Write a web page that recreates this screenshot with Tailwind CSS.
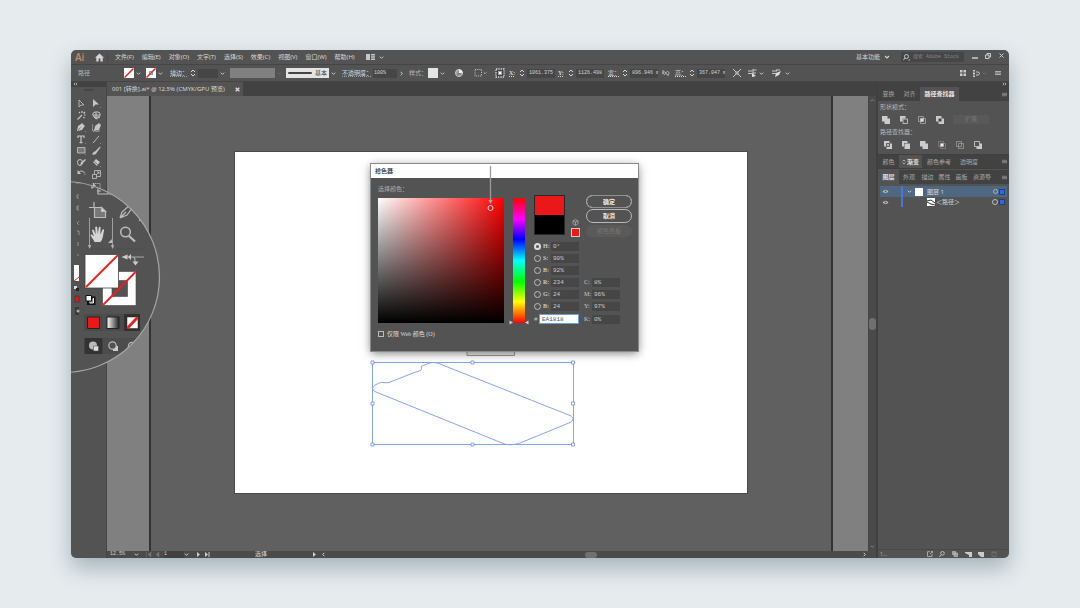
<!DOCTYPE html>
<html lang="zh-CN">
<head>
<meta charset="utf-8">
<meta name="viewport" content="width=device-width, initial-scale=1">
<title>001 [转换].ai</title>
<script src="https://cdn.jsdelivr.net/npm/@tailwindcss/browser@4"></script>
</head>
<body class="bg-[#e6ebee] font-['Noto_Sans','Noto_Sans_CJK_SC',sans-serif] text-[6px] leading-[8px] text-[#d6d6d6]">
<svg class="hidden" aria-hidden="true">
  <symbol id="chev" viewBox="0 0 6 6"><path d="M1 2l2 2 2-2" fill="none" stroke="currentColor" stroke-width="1.1"/></symbol>
  <symbol id="right" viewBox="0 0 6 6"><path d="M2 1l2 2-2 2" fill="none" stroke="currentColor" stroke-width="1.1"/></symbol>
  <symbol id="left" viewBox="0 0 6 6"><path d="M4 1L2 3l2 2" fill="none" stroke="currentColor" stroke-width="1.1"/></symbol>
  <symbol id="step" viewBox="0 0 6 8"><path d="M1 3l2-2 2 2M1 5l2 2 2-2" fill="none" stroke="currentColor" stroke-width="1"/></symbol>
  <symbol id="menu" viewBox="0 0 6 6"><path d="M0 1.5h6M0 3h6M0 4.5h6" stroke="currentColor" stroke-width=".7"/></symbol>
  <symbol id="none" viewBox="0 0 10 10"><path d="M0 0h10v10H0z" fill="#fff"/><path d="M.5 9.5l9-9" stroke="#f02020" stroke-width="1.5"/></symbol>
  <symbol id="eye" viewBox="0 0 8 6"><path d="M.5 3Q4-1 7.500 3 4 7 .5 3z" fill="#c4c4c4"/><circle cx="4" cy="3" r="1.200" fill="#4c5560"/></symbol>
</svg>
<div class="flex min-h-screen px-[71px] py-[50px]">
<main class="relative flex flex-1 flex-col overflow-hidden rounded-[5px] bg-[#535353] shadow-[0_10px_22px_#a3b2bb]">

  <header class="flex h-[14px] shrink-0 items-center">
    <span class="w-[20px] pl-1 font-['Open_Sans'] text-[10px] font-semibold leading-[12px] text-[#c98a63]">Ai</span>
    <button aria-label="主页" class="flex w-[16px] justify-center"><svg class="size-[9px]" viewBox="0 0 9 9"><path d="M4.500 .5L0 4.700h1.300V8.500h2.300V5.500h1.800v3h2.300V4.700H9z" fill="#d6d6d6"/></svg></button>
    <span class="h-2 w-px bg-[#474747]"></span>
    <nav class="ml-[7px] flex gap-[8px] whitespace-nowrap">
      <button>文件(F)</button><button>编辑(E)</button><button>对象(O)</button><button>文字(T)</button><button>选择(S)</button><button>效果(C)</button><button>视图(V)</button><button>窗口(W)</button><button>帮助(H)</button>
    </nav>
    <button aria-label="排列文档" class="ml-[11px] flex items-center gap-1"><svg class="h-[6px] w-[9px]" viewBox="0 0 9 6"><path d="M0 0h4v6H0zM5 0h4v1.500H5zM5 2.300h4v1.500H5zM5 4.500h4V6H5z" fill="#c6c6c6"/></svg><svg class="size-[5px]"><use href="#chev"/></svg></button>
    <div class="ml-auto flex h-full items-center">
      <button class="flex items-center gap-1">基本功能<svg class="size-[6px]"><use href="#chev"/></svg></button>
      <label class="ml-[11px] flex h-[10px] w-[63px] items-center gap-[3px] bg-[#464646] pl-[2px]">
        <svg class="size-[7px] shrink-0" viewBox="0 0 7 7"><circle cx="3.500" cy="2.500" r="2" fill="none" stroke="#c4c4c4"/><path d="M2 4L.3 6.200M5.500 6h1.500" stroke="#c4c4c4"/></svg>
        <input aria-label="搜索" placeholder="搜索 Adobe Stock" class="w-full min-w-0 font-['Liberation_Mono','Noto_Sans_CJK_SC',monospace] text-[5px] leading-[8px] outline-none placeholder:text-[#858585]">
      </label>
      <button aria-label="最小化" class="ml-[8px]"><svg class="size-[6px]" viewBox="0 0 6 6"><path d="M0 4h6" stroke="#ccc" stroke-width="1.300"/></svg></button>
      <button aria-label="还原" class="ml-[7px] mb-[3px]"><svg class="size-[6px]" viewBox="0 0 6 6"><path d="M2 2V.5h3.500V4H4M.5 2H4v3.500H.5z" fill="none" stroke="#ccc"/></svg></button>
      <button aria-label="关闭" class="ml-[8px] mr-[5px] mb-[4px]"><svg class="size-[5px]" viewBox="0 0 5 5"><path d="M.5 .5l4 4m0-4l-4 4" stroke="#ccc"/></svg></button>
    </div>
  </header>

  <section aria-label="控制" class="flex h-[18px] shrink-0 items-center whitespace-nowrap border-y border-[#454545]">
    <span class="w-[53px] pl-[7px] text-[#b4b4b4]">路径</span>
    <button aria-label="填色" class="flex w-[22px] items-center gap-[2px]"><svg class="size-[10px]"><use href="#none"/></svg><svg class="size-[5px]"><use href="#chev"/></svg></button>
    <button aria-label="描边颜色" class="flex w-[24px] items-center gap-[2px]"><svg class="size-[10px]" viewBox="0 0 10 10"><use href="#none"/><path d="M3.500 3.500h3v3h-3z" fill="none" stroke="#777" stroke-width=".8"/></svg><svg class="size-[5px]"><use href="#chev"/></svg></button>
    <label for="sw" class="w-[20px] underline decoration-[#999] decoration-dotted">描边：</label>
    <svg class="h-[8px] w-[6px]"><use href="#step"/></svg>
    <select id="sw" class="ml-[2px] h-[9px] w-[20px] appearance-none bg-[#464646]"><option></option></select>
    <svg class="ml-[2px] size-[5px]"><use href="#chev"/></svg>
    <span class="ml-[5px] h-[10px] w-[45px] bg-[#808080]"></span>
    <svg class="ml-[2px] size-[5px] text-[#6c6c6c]"><use href="#chev"/></svg>
    <button class="ml-[4px] flex h-[10px] w-[43px] items-center gap-[3px] bg-[#e4e4e4] pl-[2px] text-[#333]"><span class="h-[2px] w-[24px] rounded bg-[#444]"></span>基本</button>
    <svg class="ml-[2px] size-[5px]"><use href="#chev"/></svg>
    <label for="op" class="ml-[6px] w-[31px] underline decoration-[#999] decoration-dotted">不透明度：</label>
    <input id="op" value="100%" class="h-[9px] w-[24px] bg-[#464646] pl-px font-['Liberation_Mono'] text-[5px]">
    <svg class="ml-[2px] size-[5px]"><use href="#right"/></svg>
    <span class="ml-[5px] w-[19px] text-[#b8b8b8]">样式：</span>
    <button aria-label="图形样式" class="flex items-center gap-[2px]"><span class="size-[10px] bg-[#e4e4e4]"></span><svg class="size-[5px]"><use href="#chev"/></svg></button>
    <button aria-label="重新着色" class="ml-[10px]"><svg class="size-[8px]" viewBox="0 0 8 8"><circle cx="4" cy="4" r="3.500" fill="#999" stroke="#cfcfcf"/><path d="M4 4V.5A3.500 3.500 0 0 1 7.500 4z" fill="#eee"/><path d="M4 4L2 7M4 4l2.500 2.500" stroke="#555" stroke-width=".6"/></svg></button>
    <button aria-label="对齐" class="ml-[11px] flex items-center gap-px"><svg class="size-[8px]" viewBox="0 0 8 8"><path d="M1 .5h6.500v6.500H1z" fill="none" stroke="#bbb" stroke-dasharray="1.200 1"/></svg><svg class="size-[4px]"><use href="#chev"/></svg></button>
    <button aria-label="参考点" class="ml-[8px]"><svg class="size-[10px]" viewBox="0 0 10 10"><path d="M1 1h8v8H1z" fill="#3f3f3f" stroke="#ddd" stroke-width="1.300" stroke-dasharray="1.300 1"/><path d="M3 3h4v4H3z" fill="#aaa"/><path d="M4 4h2v2H4z" fill="#fff"/></svg></button>
    <label for="px" class="ml-[4px] w-[10px] font-['Liberation_Serif'] font-bold underline decoration-dotted">X:</label><svg class="h-[8px] w-[6px]"><use href="#step"/></svg>
    <input id="px" value="1061.375" class="ml-[2px] h-[9px] w-[28px] bg-[#464646] pl-[2px] font-['Liberation_Mono'] text-[5px]">
    <label for="py" class="ml-[3px] w-[10px] font-['Liberation_Serif'] font-bold underline decoration-dotted">Y:</label><svg class="h-[8px] w-[6px]"><use href="#step"/></svg>
    <input id="py" value="1126.498" class="ml-[2px] h-[9px] w-[28px] bg-[#464646] pl-[2px] font-['Liberation_Mono'] text-[5px]">
    <label for="pw" class="ml-[4px] w-[14px] underline decoration-dotted">宽：</label><svg class="h-[8px] w-[6px]"><use href="#step"/></svg>
    <input id="pw" value="896.946 mm" class="ml-[2px] h-[9px] w-[28px] bg-[#464646] pl-[2px] font-['Liberation_Mono'] text-[5px]">
    <button aria-label="约束比例" class="ml-[4px]"><svg class="h-[6px] w-[8px]" viewBox="0 0 8 6"><path d="M4 3c-3-3-4 0-2.500 1S4 4 4 3c0-2 3-2 3 0S4 5 4 3M1 0v4m5 0v2" fill="none" stroke="#b5b5b5"/></svg></button>
    <label for="ph" class="ml-[5px] w-[14px] underline decoration-dotted">高：</label><svg class="h-[8px] w-[6px]"><use href="#step"/></svg>
    <input id="ph" value="367.047 mm" class="ml-[2px] h-[9px] w-[28px] bg-[#464646] pl-[2px] font-['Liberation_Mono'] text-[5px]">
    <button aria-label="隔离" class="ml-[8px]"><svg class="size-[8px]" viewBox="0 0 8 8"><path d="M0 0l3 3M8 0L5 3M0 8l3-3m5 3L5 5M3 3h2v2H3z" stroke="#c8c8c8" fill="none"/></svg></button>
    <button aria-label="选择类似" class="ml-[7px] flex items-center gap-[2px]"><svg class="size-[9px]" viewBox="0 0 9 9"><path d="M0 2h4M0 4.500h4M5 0v8M5 1h3.500M5 4h3" stroke="#c8c8c8" stroke-width="1.100"/><path d="M4 4l4 3-4 1z" fill="#ddd"/></svg><svg class="size-[5px]"><use href="#chev"/></svg></button>
    <button aria-label="编辑类似" class="ml-[8px] flex items-center gap-[4px]"><svg class="size-[9px]" viewBox="0 0 9 9"><path d="M0 2h5M0 4.500h4M4 1h4" stroke="#c8c8c8" stroke-width="1.100"/><path d="M3 8l1-4 5-2-2 4z" fill="#ddd"/></svg><svg class="size-[5px]"><use href="#chev"/></svg></button>
    <div class="ml-auto mr-[8px] flex items-center">
      <button aria-label="网格"><svg class="size-[6px]" viewBox="0 0 6 6"><path d="M0 0h2.500v2.500H0zM3.500 0H6v2.500H3.500zM0 3.500h2.500V6H0zM3.500 3.500H6V6H3.500z" fill="#ccc"/></svg></button>
      <button aria-label="停放" class="ml-[7px] flex items-center gap-[2px]"><svg class="size-[7px]" viewBox="0 0 7 7"><path d="M0 .5h2M0 3.500h2M0 6.500h2M1 0v7" stroke="#ccc"/><path d="M3 2h2.500l1 1.500-1 1.500H3" stroke="#ccc" fill="none"/></svg><svg class="size-[5px] text-[#777]"><use href="#chev"/></svg></button>
      <button aria-label="菜单" class="ml-[8px]"><svg class="size-[6px]"><use href="#menu"/></svg></button>
    </div>
  </section>

  <div class="flex flex-1">
    <aside aria-label="工具" class="w-[36px] border-r border-[#454545]">
      <div class="h-[5px] bg-[#424242] pl-[2px]"><svg class="h-[4px] w-[5px]" viewBox="0 0 5 4"><path d="M2 .8L1 2l1 1.200M4 .8L3 2l1 1.200" stroke="#ccc" stroke-width=".8" fill="none"/></svg></div>
      <div class="mx-auto mt-[2px] h-[2px] w-[9px] bg-[#454545]"></div>
      <div class="ml-[3px] mt-[7px] grid h-[94px] w-[30px] grid-cols-2 grid-rows-8 place-items-center text-[#c6c6c6]">
        <button aria-label="选择"><svg class="size-[9px]" viewBox="0 0 9 9"><path d="M2 1v7l2-2h3z" fill="none" stroke="currentColor" stroke-width=".8"/></svg></button>
        <button aria-label="直接选择"><svg class="size-[9px]" viewBox="0 0 9 9"><path d="M1 0v8l2.500-2.500H7zM8 9h1V8z" fill="currentColor"/></svg></button>
        <button aria-label="魔棒"><svg class="size-[9px]" viewBox="0 0 9 9"><path d="M.5 8.500L5 4M5 0v2M8.500 4H7M2 1l1 1M8 1L6.500 2.500M7.500 7L6.500 6" stroke="currentColor" stroke-width="1.200"/></svg></button>
        <button aria-label="套索"><svg class="size-[9px]" viewBox="0 0 9 9"><ellipse cx="4.500" cy="3.500" rx="3.800" ry="2.700" fill="none" stroke="currentColor"/><path d="M4 1v7M2 6l2 2 4-2M1 4h7" stroke="currentColor" fill="none"/></svg></button>
        <button aria-label="钢笔"><svg class="size-[9px]" viewBox="0 0 9 9"><path d="M0 8l1-5 3-2 3 3-2 3zM5 0l3 3-1 1-3-3zM8 9h1V8z" fill="currentColor"/><path d="M1 7l2.500-2.500" stroke="#535353" stroke-width=".6"/></svg></button>
        <button aria-label="曲率"><svg class="size-[9px]" viewBox="0 0 9 9"><path d="M2 8l1-5 4-3 2 2-2 5z" fill="currentColor"/><path d="M0 1c1 2-1 4 1 7s5-1 7 0" fill="none" stroke="currentColor" stroke-width=".8"/></svg></button>
        <button aria-label="文字"><svg class="size-[9px]" viewBox="0 0 9 9"><path d="M1 3V1h6v2M4 1v7M2.500 7.700h3" fill="none" stroke="currentColor" stroke-width="1.200"/><path d="M8 9h1V8z" fill="currentColor"/></svg></button>
        <button aria-label="直线"><svg class="size-[9px]" viewBox="0 0 9 9"><path d="M1 8l6-7" stroke="currentColor" stroke-width=".9"/><path d="M8 9h1V8z" fill="currentColor"/></svg></button>
        <button aria-label="矩形"><svg class="size-[9px]" viewBox="0 0 9 9"><path d="M.5 1.500h7.500v5.500H.5z" fill="#777" stroke="currentColor" stroke-width=".8"/><path d="M8 9h1V8z" fill="currentColor"/></svg></button>
        <button aria-label="画笔"><svg class="size-[9px]" viewBox="0 0 9 9"><path d="M0 8.500C1 8 1 5.500 3 5.500L8 .5l.5 1L4.500 7C4 8.500 2 9 0 8.500z" fill="currentColor"/></svg></button>
        <button aria-label="铅笔"><svg class="size-[9px]" viewBox="0 0 9 9"><ellipse cx="3" cy="4.500" rx="2.500" ry="3" fill="none" stroke="currentColor"/><path d="M3 7l1-2.500L8 1l1 1-4 4z" fill="currentColor"/></svg></button>
        <button aria-label="橡皮擦"><svg class="size-[9px]" viewBox="0 0 9 9"><path d="M1 4l3-3 4 3-3 4zM8 9h1V8z" fill="currentColor"/><path d="M2 3l4 4" stroke="#535353" stroke-width=".6"/></svg></button>
        <button aria-label="旋转"><svg class="size-[9px]" viewBox="0 0 9 9"><path d="M1.500 2.500A3.500 3.500 0 1 1 4 8" fill="none" stroke="currentColor" stroke-dasharray="7 .8 1"/><path d="M.5 0v4h3.500z" fill="currentColor"/></svg></button>
        <button aria-label="缩放"><svg class="size-[9px]" viewBox="0 0 9 9"><path d="M.5 4.500h4v4h-4zM2.500 4V.5h6v6H5M4 5l3-3M5 2h2v2" fill="none" stroke="currentColor" stroke-width=".8"/></svg></button>
        <button aria-label="宽度"><svg class="size-[9px]" viewBox="0 0 9 9"><path d="M0 1h4M2 0v5l-1 1" fill="none" stroke="currentColor"/></svg></button>
        <button aria-label="自由变换"><svg class="size-[9px]" viewBox="0 0 9 9"><path d="M1 1.500h7v6H1z" fill="none" stroke="currentColor" stroke-dasharray="1 .8"/><path d="M1 1v5l3-2z" fill="currentColor"/></svg></button>
      </div>
    </aside>

    <div class="flex min-w-0 flex-1 flex-col">
      <div class="flex h-[14px] bg-[#424242]">
        <button class="flex items-center gap-[10px] whitespace-nowrap bg-[#535353] pl-[5px] pr-[3px]">001 [转换].ai* @ 12.5% (CMYK/GPU 预览)<svg class="size-[5px]" viewBox="0 0 5 5"><path d="M.7 .7l3.600 3.600m0-3.600L.7 4.300" stroke="#ddd" stroke-width="1.300"/></svg></button>
      </div>
      <div class="flex flex-1">
        <div class="relative flex flex-1 overflow-hidden bg-[#606060]">
          <span class="w-[42px] bg-[#808080]"></span><span class="w-[2px] bg-[#333]"></span>
          <span class="ml-auto w-[2px] bg-[#333]"></span><span class="w-[35px] bg-[#808080]"></span>
          <div class="absolute left-[128px] top-[56px] h-[341px] w-[512px] bg-white outline outline-[#4a4a4a]"></div>
          <svg class="absolute left-[260px] top-[250px] h-[104px] w-[214px]" viewBox="367 346 214 104" fill="none" stroke="#86a4f4">
            <path d="M467 348v7.500h47.500V348" fill="#eee" stroke="#999"/>
            <path d="M372.500 362.500h201v82h-201z" stroke-width="1"/>
            <path d="M373 390c-1-2 0-4 3-5.500 8-4 6-1 13-2l24-9.500c4-1.500 9-2 8.500-4.500l-.5-2c3-1 8-4 12-4 5 0 8 2 12 3.500L570 415.500c4 2 4 5 0 7L525 441c-9 4-16 5-23 2L376 392q-2-1-3-2z"/>
            <g fill="#fff" stroke="#6d90f0" stroke-width=".8"><path d="M371 361h3v3h-3zM471 361h3v3h-3zM571.500 361h3v3h-3zM371 402h3v3h-3zM571.500 402h3v3h-3zM371 443h3v3h-3zM471 443h3v3h-3zM571.500 443h3v3h-3z"/></g>
          </svg>

          <div role="dialog" aria-label="拾色器" class="absolute left-[264px] top-[68px] w-[267px] bg-[#535353] pb-[13px] text-[#c8c8c8] shadow-[0_2px_9px_#0008] outline outline-[#8a8a8a]">
            <h1 class="flex h-[14px] items-center bg-white pl-[4px] font-medium text-[#222]">拾色器</h1>
            <div class="flex items-start pl-[7px]">
              <div class="w-[126px]">
                <p class="flex h-[20px] items-center pt-[2px] text-[#ababab]">选择颜色：</p>
                <div class="relative h-[125px] bg-[linear-gradient(to_top,#000,transparent),linear-gradient(to_right,#fff,#f00)]">
                  <svg class="absolute left-[107px] top-[-32px] h-[46px] w-[12px]" viewBox="0 0 12 46"><path d="M5.500 0v35" stroke="#9a9a9a" stroke-width="1.300"/><path d="M3.500 34h4l-2 4z" fill="#aaa"/><circle cx="5.500" cy="42" r="2.500" fill="none" stroke="#e0d0d0"/></svg>
                </div>
                <label class="mt-[7px] flex items-center gap-[3px] whitespace-nowrap font-['Liberation_Serif','Noto_Sans_CJK_SC',serif] text-[#ddd]"><input type="checkbox" class="size-[6px] appearance-none border border-[#bbb]">仅限 Web 颜色 (O)</label>
              </div>
              <div class="relative ml-[9px] mt-[20px] h-[125px] w-[12px] bg-[linear-gradient(#f00,#f0f_17%,#00f_33%,#0ff_50%,#0f0_67%,#ff0_83%,#f00)]">
                <svg class="absolute left-[-4px] top-[122px] h-[5px] w-[20px]" viewBox="0 0 20 5"><path d="M.5 .5v4l3.500-2zM19.500 .5v4L16 2.500z" fill="#ccc"/></svg>
              </div>
              <div class="ml-[9px] mt-[17px] flex-1">
                <div class="flex">
                  <div class="h-[40px] w-[31px] border border-[#282828] bg-black"><div class="h-[19px] bg-[#ea1818]"></div></div>
                  <div class="ml-[6px] flex w-[9px] flex-col items-center justify-end gap-[2px]"><svg class="size-[7px]" viewBox="0 0 7 7"><path d="M3.500 .5l2.500 1.300v3L3.500 6.500 1 4.800v-3zM1 1.800l2.500 1.200L6 1.800M3.500 3v3.500" fill="none" stroke="#aaa" stroke-width=".8"/></svg><span class="size-[9px] border border-[#ccc] bg-[#ea1818]"></span></div>
                  <div class="ml-[6px] flex w-[46px] flex-col gap-px text-[#eee]">
                    <button class="h-[13px] rounded-full border border-[#e4e4e4] font-bold outline outline-[#909090] -outline-offset-1">确定</button>
                    <button class="h-[14px] rounded-full border border-[#b8b8b8] font-bold">取消</button>
                    <button disabled class="mt-px h-[12px] rounded-full bg-[#5a5a5a] text-[#757575]">颜色色板</button>
                  </div>
                </div>
                <div class="mt-[5px] grid grid-cols-[17px_28px_13px_28px] items-center gap-y-[3px] font-['Liberation_Mono'] text-[6px] leading-[9px]">
                  <label for="h" class="flex items-center gap-[2px] font-['Liberation_Serif'] font-bold"><input type="radio" name="m" checked aria-label="H" class="size-[7px] appearance-none rounded-full border-2 border-[#ddd] bg-[#535353]">H:</label><input id="h" value="0°" class="h-[9px] w-full bg-[#464646] pl-[2px]"><span></span><span></span>
                  <label for="s" class="flex items-center gap-[2px] font-['Liberation_Serif'] font-bold"><input type="radio" name="m" aria-label="S" class="size-[7px] appearance-none rounded-full border border-[#bbb]">S:</label><input id="s" value="90%" class="h-[9px] w-full bg-[#464646] pl-[2px]"><span></span><span></span>
                  <label for="b" class="flex items-center gap-[2px] font-['Liberation_Serif'] font-bold"><input type="radio" name="m" aria-label="B" class="size-[7px] appearance-none rounded-full border border-[#bbb]">B:</label><input id="b" value="92%" class="h-[9px] w-full bg-[#464646] pl-[2px]"><span></span><span></span>
                  <label for="r" class="flex items-center gap-[2px] font-['Liberation_Serif'] font-bold"><input type="radio" name="m" aria-label="R" class="size-[7px] appearance-none rounded-full border border-[#bbb]">R:</label><input id="r" value="234" class="h-[9px] w-full bg-[#464646] pl-[2px]"><label for="c" class="pl-[5px] font-['Liberation_Serif']">C:</label><input id="c" value="8%" class="h-[9px] w-full bg-[#464646] pl-[2px]">
                  <label for="g" class="flex items-center gap-[2px] font-['Liberation_Serif'] font-bold"><input type="radio" name="m" aria-label="G" class="size-[7px] appearance-none rounded-full border border-[#bbb]">G:</label><input id="g" value="24" class="h-[9px] w-full bg-[#464646] pl-[2px]"><label for="mg" class="pl-[5px] font-['Liberation_Serif']">M:</label><input id="mg" value="96%" class="h-[9px] w-full bg-[#464646] pl-[2px]">
                  <label for="bl" class="flex items-center gap-[2px] font-['Liberation_Serif'] font-bold"><input type="radio" name="m" aria-label="蓝" class="size-[7px] appearance-none rounded-full border border-[#bbb]">B:</label><input id="bl" value="24" class="h-[9px] w-full bg-[#464646] pl-[2px]"><label for="y" class="pl-[5px] font-['Liberation_Serif']">Y:</label><input id="y" value="97%" class="h-[9px] w-full bg-[#464646] pl-[2px]">
                  <div class="col-span-2 flex items-center justify-between"><label for="hex">#</label><input id="hex" value="EA1818" class="h-[10px] w-[40px] border border-[#6ba0e0] bg-white pl-[2px] text-[#555]"></div><label for="k" class="pl-[5px] font-['Liberation_Serif']">K:</label><input id="k" value="0%" class="h-[9px] w-full bg-[#464646] pl-[2px]">
                </div>
              </div>
            </div>
          </div>
        </div>
        <div class="flex w-[8px] flex-col items-center justify-between border-l border-[#454545] bg-[#4a4a4a] py-[2px] text-[#8a8a8a]"><svg class="size-[5px] rotate-180"><use href="#chev"/></svg><span class="h-[12px] w-[7px] rounded bg-[#707070]"></span><svg class="size-[5px]"><use href="#chev"/></svg></div>
      </div>
      <footer class="flex h-[7px] items-center overflow-hidden bg-[#4b4b4b] font-['Liberation_Mono','Noto_Sans_CJK_SC',monospace] leading-[7px]">
        <select aria-label="缩放比例" class="ml-[3px] w-[24px] appearance-none text-[5px]"><option>12.5%</option></select><svg class="size-[5px]"><use href="#chev"/></svg>
        <svg class="ml-[7px] h-[5px] w-[14px] text-[#777]" viewBox="0 0 14 5"><path d="M.5 0v5M5 0v5L2 2.500zM13 0v5l-3-2.500z" fill="currentColor" stroke="currentColor" stroke-width=".5"/></svg>
        <select aria-label="画板" class="ml-[4px] w-[20px] appearance-none bg-[#404040] text-[5px]"><option>1</option></select><svg class="size-[5px]"><use href="#chev"/></svg>
        <svg class="ml-[7px] h-[5px] w-[14px]" viewBox="0 0 14 5"><path d="M1 0v5l3-2.500zM9 0v5l3-2.500zM12.500 0h1v5h-1z" fill="#ccc"/></svg>
        <span class="ml-[45px] w-[58px] text-[6px]">选择</span>
        <svg class="h-[5px] w-[4px]" viewBox="0 0 4 5"><path d="M0 0v5l3-2.500z" fill="#ccc"/></svg>
        <svg class="ml-[4px] size-[5px]"><use href="#left"/></svg>
        <div class="flex flex-1 justify-center pr-[6px]"><span class="h-[6px] w-[12px] rounded bg-[#707070]"></span></div>
        <svg class="mr-[9px] size-[5px]"><use href="#right"/></svg>
      </footer>
    </div>

    <aside aria-label="面板" class="flex w-[133px] flex-col border-l-2 border-[#404040] text-[#a8a8a8]">
      <div class="flex h-[5px] justify-end bg-[#424242] pr-[2px]"><svg class="h-[4px] w-[5px]" viewBox="0 0 5 4"><path d="M1 .8L2 2 1 3.200M3 .8L4 2 3 3.200" stroke="#ccc" stroke-width=".8" fill="none"/></svg></div>
      <div class="flex h-[14px] items-center bg-[#424242] pr-[2px]"><button class="w-[21px]">变换</button><button class="w-[21px]">对齐</button><button class="h-full w-[39px] bg-[#535353] font-bold text-[#e8e8e8]">路径查找器</button><svg class="ml-auto size-[5px]"><use href="#menu"/></svg></div>
      <div class="h-[52px] pl-[2px] pt-[2px]">
        <p class="text-[#b8b8b8]">形状模式：</p>
        <div class="flex h-[17px] items-center gap-[10px] pl-[2px]">
          <button aria-label="联集"><svg class="size-[8px]" viewBox="0 0 8 8"><path d="M0 0h5.500v2.500H8V8H2.500V5.500H0z" fill="#ccc"/></svg></button>
          <button aria-label="减去顶层"><svg class="size-[8px]" viewBox="0 0 8 8"><path d="M0 0h5.500v2.500h-3v3H0z" fill="#ccc"/><path d="M3 3h4.500v4.500H3z" fill="none" stroke="#bbb"/></svg></button>
          <button aria-label="交集"><svg class="size-[8px]" viewBox="0 0 8 8"><path d="M.5 .5h5v5h-5zM2.500 2.500h5v5h-5z" fill="none" stroke="#aaa" stroke-width=".8"/><path d="M2.500 2.500h3v3h-3z" fill="#ddd"/></svg></button>
          <button aria-label="差集"><svg class="size-[8px]" viewBox="0 0 8 8"><path d="M0 0h5.500v2.500H8V8H2.500V5.500H0z" fill="#ccc"/><path d="M2.500 2.500h3v3h-3z" fill="#444"/></svg></button>
          <button disabled class="h-[9px] w-[36px] -ml-px bg-[#595959] leading-[9px] text-[#747474]">扩展</button>
        </div>
        <p class="text-[#b8b8b8]">路径查找器：</p>
        <div class="flex h-[17px] items-center gap-[10px] pl-[4px]">
          <button aria-label="分割"><svg class="size-[8px]" viewBox="0 0 8 8"><path d="M0 0h5.500v2.500H8V8H2.500V5.500H0z" fill="#ccc"/><path d="M2.500 5.500v-3h3v3h-3" fill="#bbb" stroke="#444" stroke-width=".8"/></svg></button>
          <button aria-label="修边"><svg class="size-[8px]" viewBox="0 0 8 8"><path d="M0 0h5.500v2H2v3.500H0zM2.500 2.500H8V8H2.500z" fill="#ccc"/></svg></button>
          <button aria-label="合并"><svg class="size-[8px]" viewBox="0 0 8 8"><path d="M0 0h5.500v2.500H8V8H2.500V5.500H0z" fill="#ccc"/></svg></button>
          <button aria-label="裁剪"><svg class="size-[8px]" viewBox="0 0 8 8"><path d="M.5 .5h5v5h-5zM2.500 2.500h5v5h-5z" fill="none" stroke="#888" stroke-width=".7"/><path d="M2.500 2.500h3v3h-3z" fill="#eee"/></svg></button>
          <button aria-label="轮廓"><svg class="size-[8px]" viewBox="0 0 8 8"><path d="M.5 .5h5v5h-5zM2.500 2.500h5v5h-5z" fill="none" stroke="#999" stroke-width=".8"/></svg></button>
          <button aria-label="减去后方对象"><svg class="size-[8px]" viewBox="0 0 8 8"><path d="M2.500 5.500V8H8V2.500H5.500v3z" fill="#ccc"/><path d="M.5 .5h5v5h-5z" fill="none" stroke="#bbb"/></svg></button>
        </div>
      </div>
      <div class="mt-px flex h-[15px] items-center border-y border-[#3f3f3f] bg-[#424242] pr-[2px]"><button class="w-[21px]">颜色</button><button class="flex h-full w-[23px] items-center justify-center gap-px bg-[#535353] font-bold text-[#e0e0e0]"><svg class="h-[6px] w-[4px]" viewBox="0 0 6 8"><use href="#step"/></svg>渐变</button><button class="w-[34px]">颜色参考</button><button class="w-[26px]">透明度</button><svg class="ml-auto size-[5px]"><use href="#menu"/></svg></div>
      <div class="mt-px flex h-[14px] items-center bg-[#424242] pr-[2px]"><button class="h-full w-[21px] bg-[#535353] font-bold text-[#e0e0e0]">图层</button><button class="w-[20px]">外观</button><button class="w-[17px]">描边</button><button class="w-[17px]">属性</button><button class="w-[17px]">画板</button><button class="w-[24px]">资源导</button><svg class="ml-auto size-[5px]"><use href="#menu"/></svg></div>
      <div class="mx-[2px] mt-[2px] flex h-[11px] items-center bg-[#4f6780] pr-[3px] text-[#d8dde2]"><svg class="ml-[2px] h-[5px] w-[7px]"><use href="#eye"/></svg><span class="ml-[12px] h-full w-[2px] bg-[#4a74dc]"></span><svg class="ml-[4px] size-[5px]"><use href="#chev"/></svg><span class="ml-[3px] mr-[4px] size-[8px] bg-white"></span>图层 1<span class="ml-auto mr-[2px] size-[5px] rounded-full border border-[#aab4bd]"></span><span class="size-[4px] bg-[#2f66f0] outline outline-[#23406e]"></span></div>
      <div class="mx-[2px] flex h-[10px] items-center pr-[3px] text-[#d0d0d0]"><svg class="ml-[2px] h-[5px] w-[7px]"><use href="#eye"/></svg><span class="ml-[12px] h-full w-[2px] bg-[#4a74dc]"></span><svg class="ml-[24px] mr-px size-[8px]" viewBox="0 0 8 8"><path d="M0 0h8v8H0z" fill="#fff"/><path d="M0 3l4-1 4 3M0 4l4 2 4 1" stroke="#333" fill="none"/></svg>＜路径＞<span class="ml-auto mr-[2px] size-[6px] rounded-full border border-[#bbb]"></span><span class="size-[4px] bg-[#2f66f0] outline outline-[#2b3c62]"></span></div>
      <div class="mt-auto flex h-[9px] items-center justify-between border-t border-[#494949] pl-[2px] pr-[12px]"><span class="mr-[33px] text-[5px]">1...</span>
        <button aria-label="收集以导出"><svg class="size-[6px]" viewBox="0 0 6 6"><path d="M3 .7H.5v4.800h4.500V3M3 3l2.500-2.500M4 .5h1.700v1.700" fill="none" stroke="#bbb" stroke-width=".8"/></svg></button>
        <button aria-label="定位对象"><svg class="size-[6px]" viewBox="0 0 6 6"><circle cx="3.500" cy="2.300" r="1.800" fill="none" stroke="#bbb"/><path d="M2 4L.3 6" stroke="#bbb"/></svg></button>
        <button aria-label="剪切蒙版"><svg class="size-[6px]" viewBox="0 0 6 6"><path d="M.5 .5h3v3h-3zM2 2h3.500v3.500H2z" fill="#999" stroke="#bbb" stroke-width=".7"/></svg></button>
        <button aria-label="新建子图层"><svg class="h-[6px] w-[7px]" viewBox="0 0 7 6"><path d="M0 1h7v5H4V4L0 2z" fill="#ccc"/></svg></button>
        <button aria-label="新建图层"><svg class="size-[6px]" viewBox="0 0 6 6"><path d="M0 1h6v5H3L0 3z" fill="#ccc"/></svg></button>
        <button aria-label="删除"><svg class="size-[6px]" viewBox="0 0 6 6"><path d="M1 1.500h4v4H1zM0 1h6" fill="none" stroke="#6c6c6c"/></svg></button>
      </div>
    </aside>
  </div>

  <svg class="absolute left-0 top-[130px] h-[194px] w-[90px]" viewBox="71 180 90 194" aria-label="放大的填色和描边工具">
    <defs><clipPath id="lens"><circle cx="64" cy="277" r="95"/></clipPath><linearGradient id="gr"><stop stop-color="#fff"/><stop offset="1" stop-color="#222"/></linearGradient></defs>
    <circle cx="64" cy="277" r="95.500" fill="#535353"/>
    <g clip-path="url(#lens)">
      <g fill="none" stroke="#999" stroke-width=".9"><path d="M76 183h3M79 195h-2v3h2M79 206h-2v4h2M77 208h2M79 221l-2 2 2 2M77 231h2v4M78 242v4M77 255h2"/></g>
      <path d="M74 265h5v16h-5z" fill="#fff"/><path d="M74 281l5-4" stroke="#f22"/><path d="M74 286h3v3h-3z" fill="#ddd"/><path d="M76 288h3v3h-3z" fill="#222"/><path d="M75 296h4v6h-4z" fill="#e01818" stroke="#333" stroke-width=".6"/><path d="M75 307h4v8h-4z" fill="#383838"/><circle cx="78" cy="311" r="1.500" fill="#aaa"/>
      <g fill="none" stroke="#bdbdbd" stroke-width="1.200">
        <path d="M91 184h9M98 187v7h10v-5M97 191h4M92 182v6l3-2" />
        <path d="M108 192l2 3h3v-3z" fill="#bdbdbd" stroke="none"/>
        <path d="M89 207.500h6M94 202v6"/><path d="M94.500 207.500h7l4 4v6h-11z" fill="#777"/><path d="M101.500 207.500v4h4z" fill="#ddd"/>
        <path d="M120 218l2-6 9-8M120 218l7-3 6-8M121 217l5-5" />
        <circle cx="125.500" cy="232" r="4.800" stroke-width="1.500"/><path d="M129 236l6 5.500" stroke-width="2.200"/>
      </g>
      <path d="M139 218v3h2.500zM112 239v4h-4z" fill="#bbb"/>
      <path d="M94.500 242c-1-3-3.500-5-4-7 1-1 2 0 3.500 1.500l-2-6c0-1.500 1.500-1.500 2 0l1.700 4-.5-7c.2-1.300 1.800-1.300 2 0l.6 6.500 1-6.500c.5-1.200 1.800-1 1.800.3l-.3 6.700 2-4.500c.8-1.200 2-.6 1.700.7-1 4-.7 8-3.500 11.300z" fill="#d4d4d4"/>
      <path d="M89.500 218v28M112.500 218v28" stroke="#a0a0a0" stroke-width="1"/><path d="M88 245h3.200l-1.600 4.500zM111 245h3.200l-1.600 4.500z" fill="#b0b0b0"/>
      <path d="M86 249h57" stroke="#4b4b4b" stroke-width=".7"/>
      <path d="M124 257h20M128 257h4q3 0 3 3v4" stroke="#aaa" fill="none" stroke-width="1.200"/><path d="M121.500 257l6-2.500v5zM132.500 261.500h6l-3 4zM128 257l3-3v6z" fill="#ccc"/>
      <path d="M102.500 271.500h33.500v34h-33.500zM112 280.500v16h15.500v-16z" fill="#fff" fill-rule="evenodd" stroke="#444" stroke-width=".6"/><path d="M103 305l32.500-33" stroke="#f01c1c" stroke-width="1.800"/>
      <path d="M85 254.500h33.500v33.500H85z" fill="#fff" stroke="#444" stroke-width=".8"/><path d="M86 287l32-32" stroke="#f01c1c" stroke-width="1.800"/>
      <path d="M88 297.500h6.500v6.500H88z" fill="#888" stroke="#111" stroke-width="2"/><path d="M86 295.500h5.500v5.500H86z" fill="#fff" stroke="#111"/><path d="M93.500 298v5h-4" fill="none" stroke="#eee"/>
      <path d="M84 314h40v17H84z" fill="#4a4a4a"/><path d="M104 314v17" stroke="#555"/><path d="M124 314h16v17h-16z" fill="#313131"/>
      <path d="M87.500 317h12v11.500h-12z" fill="#ea1818" stroke="#222"/><path d="M107 317h12v11.500h-12z" fill="url(#gr)" stroke="#222"/><path d="M127 317h11v11.500h-11z" fill="#fff" stroke="#222" stroke-width=".5"/><path d="M127.500 328l10-10.500" stroke="#f01c1c" stroke-width="2.800"/>
      <path d="M84.500 338h18v16h-18z" fill="#333"/><path d="M103 338h40v16h-40z" fill="#4c4c4c"/>
      <circle cx="93" cy="345.500" r="4" fill="#bbb"/><path d="M93.500 346h5v5h-5z" fill="#ddd" stroke="#444" stroke-width=".5"/>
      <path d="M113 346h5v5h-5z" fill="#ccc"/><circle cx="112.500" cy="345.500" r="3.700" fill="#505050" stroke="#bbb" stroke-width="1.200"/>
      <circle cx="132" cy="346" r="3.700" fill="none" stroke="#bbb" stroke-width="1.200"/>
    </g>
    <circle cx="64" cy="277" r="95.500" fill="none" stroke="#a6a6a6" stroke-width="1.200"/>
  </svg>
</main>
</div>
</body>
</html>
